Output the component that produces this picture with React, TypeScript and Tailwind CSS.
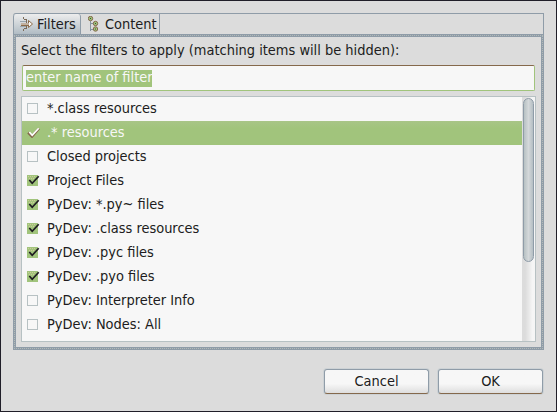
const items = [
  { label: "*.class resources", checked: false },
  { label: ".* resources", checked: true, selected: true },
  { label: "Closed projects", checked: false },
  { label: "Project Files", checked: true },
  { label: "PyDev: *.py~ files", checked: true },
  { label: "PyDev: .class resources", checked: true },
  { label: "PyDev: .pyc files", checked: true },
  { label: "PyDev: .pyo files", checked: true },
  { label: "PyDev: Interpreter Info", checked: false },
  { label: "PyDev: Nodes: All", checked: false },
];

function FilterIcon() {
  return (
    <svg width="14" height="16" viewBox="0 0 14 16" fill="none" className="shrink-0">
      <g shapeRendering="crispEdges">
        <path d="M3.500 1v2M3.500 3.500h3M6.500 4v3M3.500 14.500v-2M3.500 12.500h3M6.500 12V9" stroke="#7b6a58" />
        <path d="M0 5.500h6M0 10.500h6" stroke="#9aa5ac" />
        <path d="M1 8h8" stroke="#8c6b48" strokeWidth="3" />
      </g>
      <path d="M8.500 4.500L12.500 8l-4 3.500z" fill="#f7f7f7" stroke="#8c6b48" />
      <path d="M1 8h10" stroke="#f7f7f7" />
    </svg>
  );
}

function TreeIcon() {
  return (
    <svg width="12" height="16" viewBox="0 0 12 16" fill="none" className="shrink-0">
      <path d="M2.500 5v10M3 7.500h3M3 13.500h3" stroke="#8795a1" shapeRendering="crispEdges" />
      {[[2.5, 2.5], [7.5, 7.5], [7.5, 13]].map(([x, y]) => (
        <g key={y}>
          <circle cx={x} cy={y} r="2.200" fill="#9fc37c" stroke="#85694c" />
          <rect x={x - 0.5} y={y - 0.5} width="1" height="1" fill="#3a5c24" />
        </g>
      ))}
    </svg>
  );
}

function Checkbox({ checked, selected }: { checked: boolean; selected?: boolean }) {
  if (!checked) return <span className="size-[11px] shrink-0 border border-[#b7c1c3] bg-[#f7f7f7]" />;
  return (
    <svg width="13" height="11" viewBox="0 0 13 11" fill="none" className="-mr-0.5 shrink-0">
      {!selected && <rect width="11" height="11" fill="#a1c47c" />}
      {!selected && <path d="M1 1.500h8M2 3.500h6" stroke="#cfcb98" strokeDasharray="1 1" />}
      {selected && <path d="M1.200 5.500l3.800 4L12 1.500" stroke="#85694c" strokeWidth="2.600" />}
      <path d="M2.300 5l2.900 3.300L11.700 1.200" stroke={selected ? "#fff" : "#1d1b20"} strokeWidth="1.700" />
    </svg>
  );
}

function Button({ label }: { label: string }) {
  return (
    <button className="h-[25px] w-[105px] rounded-[3px] border border-[#8f9ca8] border-b-[#85694c] bg-linear-to-b from-[#f7f7f7] from-60% to-[#dedede] pb-0.5 shadow-[0_0_0_1px_#cdd2d5]">
      {label}
    </button>
  );
}

export default function App() {
  return (
    <div className="flex h-[412px] w-[557px] flex-col border border-[#201e28] bg-[#dcdcdc] pt-3 pl-3 font-['DejaVu_Sans_Condensed','DejaVu_Sans',sans-serif] text-[14.440px] leading-4 text-[#201c20]">
      <div className="flex h-[21px] w-[531px] rounded-tl-[3px] border-t border-r border-[#8f9ca8]">
        <div className="flex w-[68px] items-center gap-[3px] rounded-t-[3px] border-r border-l border-[#8f9ca8] bg-linear-to-b from-[#ededed] to-[#b1bcc4] pl-1.5">
          <FilterIcon />
          <span>Filters</span>
        </div>
        <div className="flex w-[79px] items-center gap-[5px] border-r border-[#8f9ca8] pl-[7px]">
          <TreeIcon />
          <span>Content</span>
        </div>
      </div>
      <div className="h-[316px] w-[531px] border border-[#8f9ca8] bg-[#8f9ca8]">
        <div className="h-full border border-dotted border-[#b3bab8] p-px">
          <div className="h-full bg-[#dcdcdc] pt-[5px] pl-[5px]">
            <div className="h-4">Select the filters to apply (matching items will be hidden):</div>
            <div className="mt-[7px] ml-px flex h-[26px] w-[513px] items-center rounded-[2px] border border-[#a1c47c] border-t-[#85694c] bg-[#f7f7f7] pl-[3px]">
              <span className="h-[17px] w-[126px] whitespace-nowrap bg-[#a1c47c] leading-[15px] text-[#f7f7f7]">enter name of filter</span>
            </div>
            <div className="mt-[5px] flex h-[246px] w-[515px] border border-[#b7c1c3] bg-[#f7f7f7]">
              <div className="flex-1">
                {items.map((item) => (
                  <div key={item.label} className={`flex h-6 items-center gap-[9px] pb-0.5 pl-[5px] ${item.selected ? "bg-linear-to-b from-[#a8c587] to-[#a1c47c] to-30% text-[#f7f7f7]" : ""}`}>
                    <Checkbox checked={item.checked} selected={item.selected} />
                    <span>{item.label}</span>
                  </div>
                ))}
              </div>
              <div className="w-[13px] bg-linear-to-r from-[#dcdcdc] from-25% to-[#f5f5f5] to-80% pt-px pl-px">
                <div className="h-[164px] w-[11px] rounded-full border border-[#8f9ca8] bg-linear-to-r from-[#b7c1c3] via-[#d4d8da] to-[#b4bec3]" />
              </div>
            </div>
          </div>
        </div>
      </div>
      <div className="mt-[19px] ml-[311px] flex gap-[9px]">
        <Button label="Cancel" />
        <Button label="OK" />
      </div>
    </div>
  );
}
